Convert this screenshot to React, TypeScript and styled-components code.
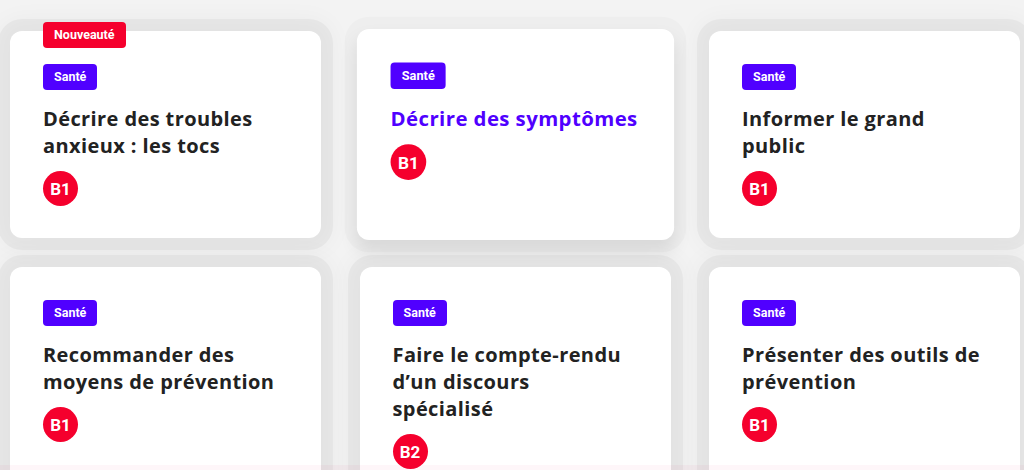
import React from "react";
import styled, { createGlobalStyle, css } from "styled-components";

const Global = createGlobalStyle`
  html, body { margin: 0; padding: 0; background: #f3f3f3; }
  body { font-family: "Open Sans", "Noto Sans", sans-serif; -webkit-font-smoothing: antialiased; }
  * { box-sizing: border-box; }
`;

const Page = styled.main`
  height: 470px;
  overflow: hidden;
  position: relative;
`;

const Grid = styled.div`
  display: grid;
  grid-template-columns: repeat(3, 311px);
  column-gap: 38.5px;
  row-gap: 29px;
  padding: 31px 0 0 10px;
`;

const Card = styled.article<{ $active?: boolean }>`
  position: relative;
  background: #fff;
  border-radius: 12px;
  padding: 33px 33px 32px;
  display: flex;
  flex-direction: column;
  align-items: flex-start;
  box-shadow: 0 0 0 12px rgba(0, 0, 0, 0.035), 0 0 22px 14px rgba(0, 0, 0, 0.03);
  ${(p) =>
    p.$active &&
    css`
      transform: scale(1.02);
      z-index: 1;
      box-shadow: 0 0 0 12px rgba(0, 0, 0, 0.02), 0 10px 18px rgba(0, 0, 0, 0.09);
    `}
`;

const Chip = styled.span<{ $tone: "new" | "topic" }>`
  display: inline-block;
  height: 26px;
  line-height: 26px;
  padding: 0 11px;
  border-radius: 4px;
  color: #fff;
  font-family: "Roboto", sans-serif;
  font-size: 12.5px;
  font-weight: 700;
  background: ${(p) => (p.$tone === "new" ? "#f5002d" : "#5000ff")};
`;

const NewChip = styled(Chip)`
  position: absolute;
  top: -9px;
  left: 33px;
`;

const Title = styled.h3<{ $active?: boolean }>`
  margin: 15px 0 12px;
  font-size: 20px;
  line-height: 27px;
  font-weight: 700;
  color: ${(p) => (p.$active ? "#5000ff" : "#222222")};
  letter-spacing: 0.4px;
`;

const Level = styled.span`
  width: 35px;
  height: 35px;
  border-radius: 50%;
  background: #f5002d;
  color: #fff;
  font-family: "Roboto", sans-serif;
  font-size: 17px;
  font-weight: 700;
  display: flex;
  align-items: center;
  justify-content: center;
`;

const BottomTint = styled.div`
  position: absolute;
  left: 0;
  right: 0;
  bottom: 0;
  height: 5px;
  background: rgba(240, 0, 90, 0.035);
  pointer-events: none;
  z-index: 2;
`;

type Item = { title: React.ReactNode; level: string; isNew?: boolean; active?: boolean };

const items: Item[] = [
  { title: <>Décrire des troubles<br />anxieux : les tocs</>, level: "B1", isNew: true },
  { title: "Décrire des symptômes", level: "B1", active: true },
  { title: <>Informer le grand<br />public</>, level: "B1" },
  { title: <>Recommander des<br />moyens de prévention</>, level: "B1" },
  { title: <>Faire le compte-rendu<br />d’un discours<br />spécialisé</>, level: "B2" },
  { title: <>Présenter des outils de<br />prévention</>, level: "B1" },
];

export default function App() {
  return (
    <Page>
      <Global />
      <Grid>
        {items.map((it, i) => (
          <Card key={i} $active={it.active}>
            {it.isNew && <NewChip $tone="new">Nouveauté</NewChip>}
            <Chip $tone="topic">Santé</Chip>
            <Title $active={it.active}>{it.title}</Title>
            <Level>{it.level}</Level>
          </Card>
        ))}
      </Grid>
      <BottomTint />
    </Page>
  );
}
